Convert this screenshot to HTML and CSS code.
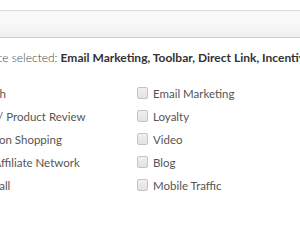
FILE: index.html
```html
<!DOCTYPE html>
<html lang="en">
<head>
  <meta charset="UTF-8">
  <title>Traffic sources</title>
  <link rel="stylesheet" href="styles.css">
</head>
<body>
  <div class="toolbar"></div>

  <div class="panel">
    <p class="summary">
      <span class="summary-label">Traffic source selected:</span>
      <span class="summary-values">Email Marketing, Toolbar, Direct Link, Incentive</span>
    </p>

    <div class="options">
      <label class="option"><input type="checkbox"><span class="box"></span>Search</label>
      <label class="option"><input type="checkbox"><span class="box"></span>Email Marketing</label>
      <label class="option"><input type="checkbox"><span class="box"></span>Deal / Product Review</label>
      <label class="option"><input type="checkbox"><span class="box"></span>Loyalty</label>
      <label class="option"><input type="checkbox"><span class="box"></span>Coupon Shopping</label>
      <label class="option"><input type="checkbox"><span class="box"></span>Video</label>
      <label class="option"><input type="checkbox"><span class="box"></span>Sub Affiliate Network</label>
      <label class="option"><input type="checkbox"><span class="box"></span>Blog</label>
      <label class="option"><input type="checkbox"><span class="box"></span>Paywall</label>
      <label class="option"><input type="checkbox"><span class="box"></span>Mobile Traffic</label>
    </div>
  </div>
</body>
</html>
```

FILE: styles.css
```css
body {
  margin: 0;
  font-family: Lato, "Open Sans", sans-serif;
  background-color: #fff;
  color: #444;
  overflow: hidden;
}

.toolbar {
  margin-top: 10px;
  height: 26px;
  border-top: 1px solid #dcdcdc;
  border-bottom: 1px solid #cfcfcf;
  background: linear-gradient(#f9f9f9, #f9f9f9 40%, #efefef);
}

.panel {
  margin-left: -44px;
}

.summary {
  margin: 0 0 0 -16px;
  padding-top: 12px;
  font-size: 12px;
  line-height: 16px;
  white-space: nowrap;
}

.summary-label {
  color: #444;
  font-weight: 300;
}

.summary-values {
  color: #333;
  font-weight: 700;
}

.options {
  display: grid;
  grid-template-columns: 181px 183px;
  row-gap: 7px;
  margin-top: 19px;
}

.option {
  display: flex;
  align-items: center;
  gap: 5px;
  height: 16px;
  font-size: 11.5px;
  color: #555;
  white-space: nowrap;
}

.option input {
  display: none;
}

.box {
  width: 9px;
  height: 10px;
  border: 1px solid #c4c4c4;
  border-radius: 2px;
  background: linear-gradient(#f0f0f0, #e2e2e2);
}
```
